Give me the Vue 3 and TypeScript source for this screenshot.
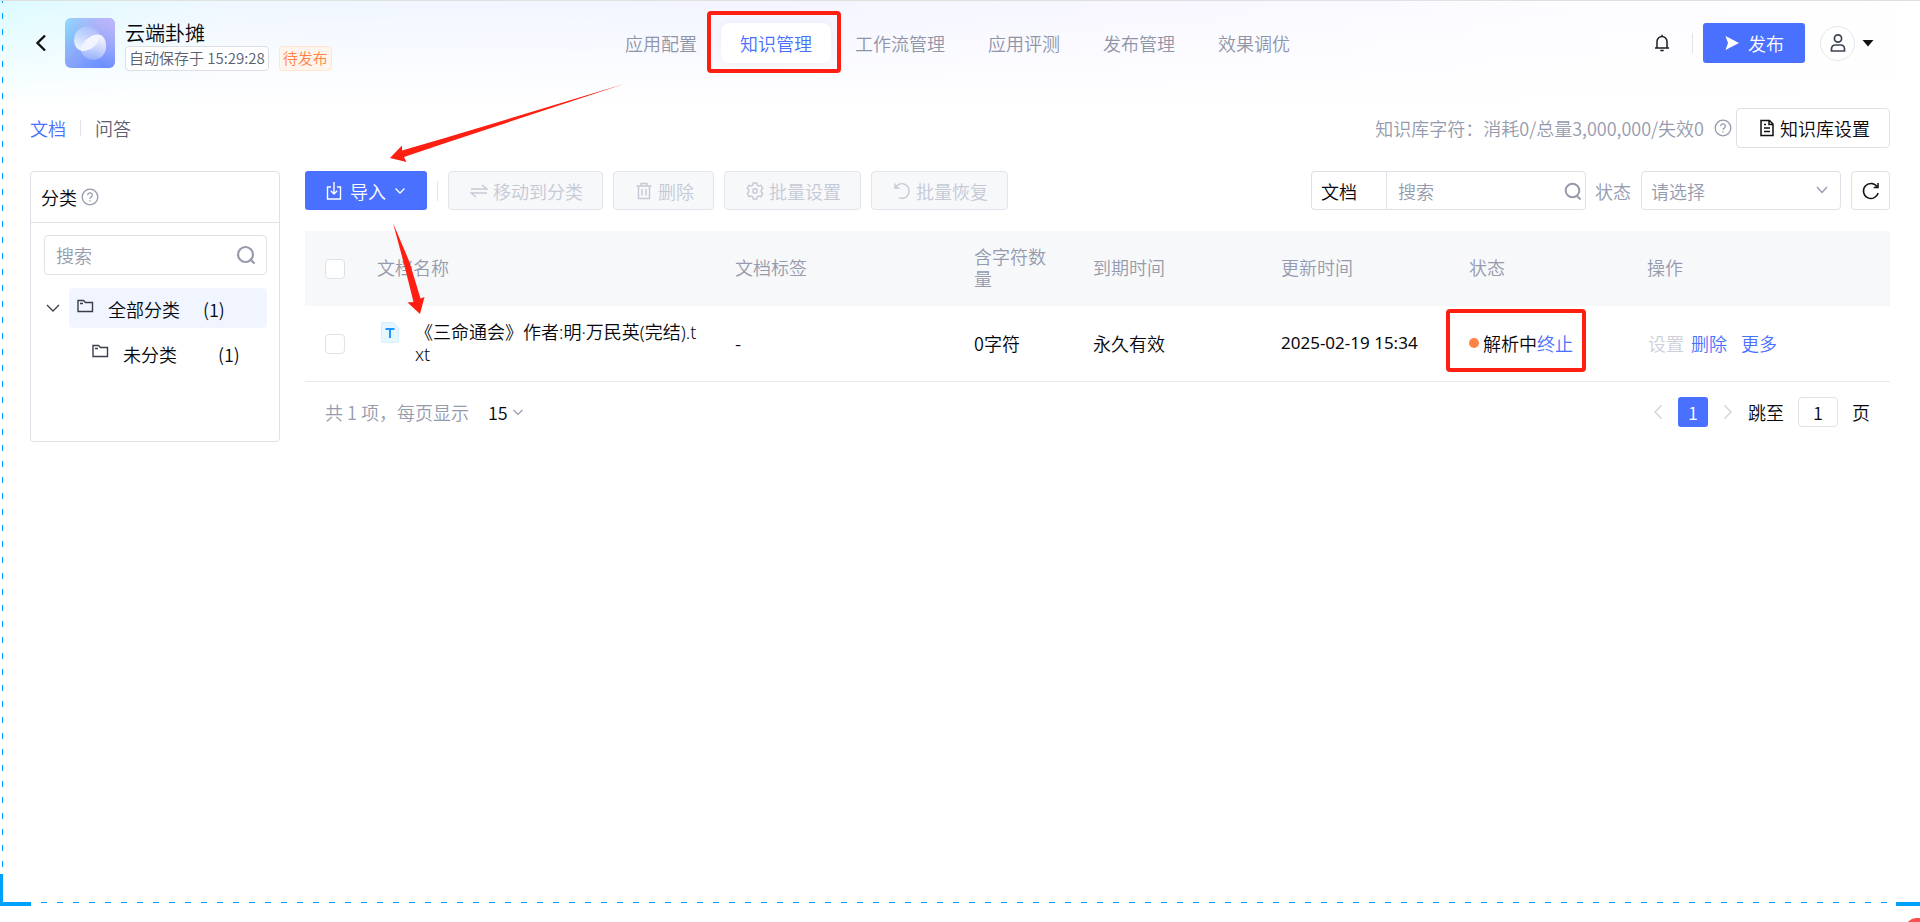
<script setup lang="ts">
import { ref } from 'vue'

interface NavItem { label: string; active?: boolean }
interface DocRow { name: string; tag: string; chars: string; expire: string; updated: string; status: string }

const nav: NavItem[] = [
  { label: '应用配置' },
  { label: '知识管理', active: true },
  { label: '工作流管理' },
  { label: '应用评测' },
  { label: '发布管理' },
  { label: '效果调优' },
]
const columns: string[] = ['文档名称', '文档标签', '含字符数量', '到期时间', '更新时间', '状态', '操作']
const rows: DocRow[] = [
  { name: '《三命通会》作者:明·万民英(完结).txt', tag: '-', chars: '0字符', expire: '永久有效', updated: '2025-02-19 15:34', status: '解析中' },
]
const categorySearch = ref('')
const keyword = ref('')
const jumpPage = ref('1')
</script>

<template>
  <div class="page">
    <header class="topbar">
      <div class="app">
        <button class="plain back" aria-label="返回">
          <svg width="12" height="18" viewBox="0 0 12 18"><path d="M10 1.500 2.500 9l7.500 7.500" fill="none" stroke="#111" stroke-width="2.400" /></svg>
        </button>
        <svg class="logo" viewBox="0 0 50 50">
          <defs>
            <linearGradient id="lg-base" x1="0" y1="0" x2="1" y2="1">
              <stop offset="0" stop-color="#86e0fb" /><stop offset=".45" stop-color="#8ba9fb" /><stop offset="1" stop-color="#5f86ff" />
            </linearGradient>
            <linearGradient id="lg-corner" x1="1" y1="0" x2=".4" y2=".6">
              <stop offset="0" stop-color="#c3b7f9" /><stop offset="1" stop-color="#c3b7f9" stop-opacity="0" />
            </linearGradient>
            <linearGradient id="lg-a" x1=".3" y1="1" x2=".6" y2="0">
              <stop offset="0" stop-color="#fff" stop-opacity=".9" /><stop offset="1" stop-color="#fff" stop-opacity=".12" />
            </linearGradient>
            <linearGradient id="lg-b" x1=".7" y1="0" x2=".4" y2="1">
              <stop offset="0" stop-color="#fff" stop-opacity=".9" /><stop offset="1" stop-color="#fff" stop-opacity=".22" />
            </linearGradient>
          </defs>
          <rect width="50" height="50" rx="6" fill="url(#lg-base)" />
          <rect width="50" height="50" rx="6" fill="url(#lg-corner)" />
          <path d="M9 22a13 13 0 0 1 25-5.500C25 16 18 21 15.500 32.500 11.500 31 9 27 9 22Z" fill="url(#lg-a)" />
          <path d="M41 27a13 13 0 0 1-25 6.500C25 34 32 28 34.500 16.500 38.500 18 41 22 41 27Z" fill="url(#lg-b)" />
          <path d="M15.500 33C16 24 24 16 34.500 16.500 34 26 26 34.500 15.500 33Z" fill="#fff" fill-opacity=".88" />
        </svg>
        <div class="app-info">
          <div class="app-name">云端卦摊</div>
          <div class="badges">
            <span class="badge">自动保存于 15:29:28</span>
            <span class="badge pending">待发布</span>
          </div>
        </div>
      </div>

      <nav class="nav">
        <a v-for="item in nav" :key="item.label" href="#" class="nav-item" :class="{ active: item.active }">
          {{ item.label }}<span v-if="item.active" class="mark nav-mark"></span>
        </a>
      </nav>

      <div class="account">
        <button class="plain" aria-label="通知">
          <svg width="16" height="18" viewBox="0 0 16 18" fill="none" stroke="#1b1d22" stroke-width="1.500">
            <path d="M1 14h14M3 14V7.500a5 5 0 0 1 10 0V14M8 2.500V.8M6.300 16.500h3.400" />
          </svg>
        </button>
        <i class="vline bell-line"></i>
        <button class="primary publish">
          <svg width="16" height="16" viewBox="0 0 16 16"><path d="M1.500 1 15 8 1.500 15 4 8Z" fill="#fff" /></svg>
          发布
        </button>
        <button class="plain user" aria-label="账户">
          <span class="avatar">
            <svg width="18" height="20" viewBox="0 0 18 20" fill="none" stroke="#3c4353" stroke-width="1.700">
              <circle cx="9" cy="5.500" r="3.600" /><path d="M2.500 18v-2.500a4 4 0 0 1 4-3.500h5a4 4 0 0 1 4 3.500V18Z" />
            </svg>
          </span>
          <svg width="12" height="8" viewBox="0 0 12 8"><path d="M.5 1h11L6 7.500Z" fill="#111" /></svg>
        </button>
      </div>
    </header>

    <div class="subbar">
      <nav class="tabs">
        <a href="#" class="tab active">文档</a>
        <i class="vline tab-line"></i>
        <a href="#" class="tab">问答</a>
      </nav>
      <div class="usage">
        <span>知识库字符：消耗0/总量3,000,000/失效0</span>
        <svg class="help" viewBox="0 0 18 18"><circle cx="9" cy="9" r="7.800" /><path d="M6.700 7.200a2.300 2.300 0 1 1 3.500 1.900c-.8.5-1.200.8-1.200 1.700M9 12.200v1.300" /></svg>
        <button class="box settings">
          <svg width="16" height="18" viewBox="0 0 16 18" fill="none" stroke="#111" stroke-width="1.500">
            <path d="M2 1.500h8.500L14 5v11.500H2ZM10 1.500V5.500h4M5 9h6M5 12.500h6M5 5.500h2" />
          </svg>
          知识库设置
        </button>
      </div>
    </div>

    <main class="content">
      <aside class="side">
        <h2 class="side-title">分类
          <svg class="help" viewBox="0 0 18 18"><circle cx="9" cy="9" r="7.800" /><path d="M6.700 7.200a2.300 2.300 0 1 1 3.500 1.900c-.8.5-1.200.8-1.200 1.700M9 12.200v1.300" /></svg>
        </h2>
        <div class="side-body">
          <label class="field side-search">
            <input v-model="categorySearch" type="text" placeholder="搜索" aria-label="搜索分类" />
            <svg width="20" height="20" viewBox="0 0 20 20" fill="none" stroke="#959bad" stroke-width="2.200"><circle cx="9.500" cy="9.500" r="7.500" /><path d="m14 14 4.500 4.500" /></svg>
          </label>
          <ul class="tree">
            <li class="node">
              <button class="plain toggle" aria-label="收起">
                <svg width="14" height="10" viewBox="0 0 14 10"><path d="m1 2 6 6 6-6" fill="none" stroke="#3a3f4b" stroke-width="1.300" /></svg>
              </button>
              <a href="#" class="node-label selected">
                <svg class="folder" viewBox="0 0 17 14"><path d="M1 1.500h5.500l2 2H15.500v9H1ZM3 4.500h3" /></svg>
                <span class="node-name">全部分类</span><span>(1)</span>
              </a>
            </li>
            <li class="node child">
              <a href="#" class="node-label">
                <svg class="folder" viewBox="0 0 17 14"><path d="M1 1.500h5.500l2 2H15.500v9H1ZM3 4.500h3" /></svg>
                <span class="node-name">未分类</span><span>(1)</span>
              </a>
            </li>
          </ul>
        </div>
      </aside>

      <section class="docs">
        <div class="toolbar">
          <div class="actions">
            <button class="primary import">
              <svg width="16" height="20" viewBox="0 0 16 20" fill="none" stroke="#fff" stroke-width="1.400">
                <path d="M5 6H1.500v12h13V6H11M8 1v12M4.800 9.800 8 13l3.200-3.200" />
              </svg>
              导入
              <svg width="12" height="8" viewBox="0 0 12 8"><path d="m1.500 1.500 4.500 4.500 4.500-4.500" fill="none" stroke="#fff" stroke-width="1.300" /></svg>
            </button>
            <i class="vline action-line"></i>
            <button class="ghost" disabled>
              <svg class="act" viewBox="0 0 18 18"><path d="M1 7h16l-5-4M17 11H1l5 4" /></svg>移动到分类
            </button>
            <button class="ghost" disabled>
              <svg class="act" viewBox="0 0 18 18"><path d="M1.500 4h15M6 4V1.500h6V4M3.500 4v12.500h11V4M7 7v6.500M11 7v6.500" /></svg>删除
            </button>
            <button class="ghost" disabled>
              <svg class="act" viewBox="0 0 18 18"><path d="M7.300 1h3.400l.6 2.200 1.500.8 2.200-.6 1.700 2.900L15.200 8v2l1.500 1.700-1.700 2.900-2.200-.6-1.500.8-.6 2.200H7.300l-.6-2.200-1.500-.8-2.200.6-1.700-2.900L2.800 10V8L1.300 6.300 3 3.400l2.200.6 1.500-.8Z" /><circle cx="9" cy="9" r="2.200" /></svg>批量设置
            </button>
            <button class="ghost" disabled>
              <svg class="act" viewBox="0 0 18 18"><path d="M2 1.500V6h4.500M2.300 5.800A7.300 7.300 0 1 1 6 15.700" /></svg>批量恢复
            </button>
          </div>

          <div class="filters">
            <select class="box kind" aria-label="搜索类型"><option>文档</option></select>
            <label class="field keyword">
              <input v-model="keyword" type="text" placeholder="搜索" aria-label="搜索文档" />
              <svg width="18" height="20" viewBox="0 0 18 20" fill="none" stroke="#959bad" stroke-width="2"><circle cx="8.500" cy="9.500" r="6.800" /><path d="m12.500 14.500 4 4" /></svg>
            </label>
            <label class="state-label" for="state">状态</label>
            <div class="select-wrap">
              <select id="state" class="box state"><option>请选择</option></select>
              <svg class="caret" width="12" height="8" viewBox="0 0 12 8"><path d="m1 1 5 5.500L11 1" fill="none" stroke="#959bad" stroke-width="1.300" /></svg>
            </div>
            <button class="box refresh" aria-label="刷新">
              <svg width="20" height="20" viewBox="0 0 20 20" fill="none" stroke="#111" stroke-width="1.500"><path d="M17.200 12A7.500 7.500 0 1 1 16 5.500M17 2v4.500h-4.300" /></svg>
            </button>
          </div>
        </div>

        <table class="grid">
          <colgroup>
            <col class="c-check" /><col class="c-name" /><col class="c-tag" /><col class="c-chars" /><col class="c-time" /><col class="c-time" /><col class="c-status" /><col class="c-ops" />
          </colgroup>
          <thead>
            <tr>
              <th class="check"><input type="checkbox" aria-label="全选" /></th>
              <th v-for="c in columns" :key="c">{{ c }}</th>
            </tr>
          </thead>
          <tbody>
            <tr v-for="r in rows" :key="r.name">
              <td class="check"><input type="checkbox" :aria-label="r.name" /></td>
              <td>
                <div class="file">
                  <svg class="file-icon" viewBox="0 0 18 21">
                    <path d="M2 .5h10.500l5 5V19a1.500 1.500 0 0 1-1.500 1.500H2A1.500 1.500 0 0 1 .5 19V2A1.500 1.500 0 0 1 2 .5Z" fill="#e6f6ff" stroke="#d4effe" />
                    <path d="M4.500 7h9M9 7v9" fill="none" stroke="#1e96ff" stroke-width="2" />
                  </svg>
                  <span class="file-name">{{ r.name }}</span>
                </div>
              </td>
              <td>{{ r.tag }}</td>
              <td>{{ r.chars }}</td>
              <td>{{ r.expire }}</td>
              <td class="date">{{ r.updated }}</td>
              <td>
                <div class="status"><i class="dot"></i>{{ r.status }}<a href="#" class="link">终止</a><span class="mark status-mark"></span></div>
              </td>
              <td>
                <div class="ops">
                  <button class="plain off" disabled>设置</button>
                  <a href="#" class="link">删除</a>
                  <a href="#" class="link more">更多</a>
                </div>
              </td>
            </tr>
          </tbody>
        </table>

        <footer class="pager">
          <div class="pager-size">
            <label for="size">共 1 项，每页显示</label>
            <div class="select-wrap">
              <select id="size" class="size"><option>15</option></select>
              <svg class="size-caret" width="12" height="8" viewBox="0 0 12 8"><path d="m1.500 1 4.500 4.500L10.500 1" fill="none" stroke="#959bad" stroke-width="1.200" /></svg>
            </div>
          </div>
          <div class="pager-nav">
            <button class="plain step" aria-label="上一页"><svg width="10" height="16" viewBox="0 0 10 16"><path d="M8.500 1.500 2 8l6.500 6.500" fill="none" stroke="#cdd0d9" stroke-width="1.300" /></svg></button>
            <button class="primary current">1</button>
            <button class="plain step" aria-label="下一页"><svg width="10" height="16" viewBox="0 0 10 16"><path d="M1.500 1.500 8 8l-6.500 6.500" fill="none" stroke="#cdd0d9" stroke-width="1.300" /></svg></button>
            <label for="jump">跳至</label>
            <input id="jump" v-model="jumpPage" class="jump" type="text" />
            <span>页</span>
          </div>
        </footer>
      </section>
    </main>

    <svg class="arrows" width="640" height="330" viewBox="0 0 640 330" fill="#ff1e12">
      <path d="M390 158 402 145.500V150.500L444 138.300 624 84 444 143.500 404 157 406.500 162Z" />
      <path d="M393 223 409.500 262 420.500 298.500 424.500 297 420 314 407.500 302.500 413.500 302 404 264Z" />
    </svg>
    <div class="guides">
      <i class="guide-left"></i><i class="guide-bottom"></i>
      <i class="corner corner-left"></i><i class="corner corner-right"></i>
      <i class="bubble"></i>
    </div>
  </div>
</template>

<style>
body { background: #fff; }
html { overflow: hidden; }
</style>

<style scoped>
.page {
  position: relative;
  box-sizing: border-box;
  min-height: 100vh;
  overflow: hidden;
  border-top: 1px solid #dfe0e0;
  font: 350 18px/22px "Noto Sans CJK SC", sans-serif;
  color: #07080c;
  background:
    linear-gradient(180deg, rgba(255, 255, 255, 0) 0, #fff 105px),
    linear-gradient(90deg, #dcfbff 0, #f0f7ff 12%, #f3f5ff 40%, #f8f7ff 60%, #fcfbff 80%, #fff 100%);
}
.page *, .page *::before { box-sizing: border-box; }
a { color: inherit; text-decoration: none; }
button, input, select { font: inherit; color: inherit; margin: 0; }
button { display: inline-flex; align-items: center; justify-content: center; padding: 0; white-space: nowrap; }
svg { flex: none; display: block; }
.plain { border: 0; background: none; }
.primary { border: 0; border-radius: 3px; background: #4a70ff; color: #fff; }
.box { border: 1px solid #dfe1e8; border-radius: 4px; background: #fff; }
.vline { display: block; width: 1px; height: 20px; background: #e1e3ea; }

.topbar { display: grid; grid-template-columns: 1fr auto 1fr; align-items: center; height: 84px; padding: 0 40px 0 35px; }
.app { display: flex; align-items: center; }
.back { width: 12px; }
.logo { width: 50px; height: 50px; margin: 0 10px 0 18px; }
.app-info { display: grid; padding-top: 4px; }
.app-name { font-size: 20px; line-height: 26px; }
.badges { display: flex; gap: 10px; }
.badge { height: 25px; padding: 0 3px; border: 1px solid #dcdee6; border-radius: 4px; background: #fff; color: #5a6072; font-size: 15px; line-height: 22px; white-space: nowrap; }
.pending { border-color: #ffe6d3; background: #fff5ec; color: #ff8345; }
.nav { display: flex; gap: 5px; }
.nav-item { position: relative; height: 40px; padding: 0 19px; border-radius: 8px; line-height: 40px; color: #8f95a8; white-space: nowrap; }
.nav-item.active { background: #fff; color: #4a70ff; box-shadow: 0 0 8px rgba(60, 80, 140, .08); }
.mark { position: absolute; border: 4px solid #ff1e12; border-radius: 4px; pointer-events: none; }
.nav-mark { inset: -12px -10px -10px -14px; }
.account { display: flex; align-items: center; justify-content: flex-end; padding-right: 6px; }
.bell-line { margin: 0 10px 0 22px; }
.publish { gap: 8px; width: 102px; height: 40px; margin-right: 15px; }
.user { gap: 7px; }
.avatar { display: grid; place-items: center; width: 35px; height: 35px; border: 1px solid #e5e7ee; border-radius: 50%; background: #fff; }

.subbar { display: flex; align-items: center; justify-content: space-between; padding: 23px 30px 0; }
.tabs { display: flex; align-items: center; gap: 14px; }
.tab { color: #5a6072; }
.tab.active { color: #4a70ff; }
.tab-line { height: 16px; }
.usage { display: flex; align-items: center; color: #959bad; }
.help { width: 18px; height: 18px; fill: none; stroke: #959bad; stroke-width: 1.300; }
.usage .help { margin: 0 4px 0 10px; }
.settings { gap: 5px; height: 40px; padding: 0 19px 0 22px; color: #07080c; }

.content { display: flex; align-items: flex-start; gap: 25px; padding: 23px 30px 0; }
.side { flex: none; width: 250px; min-height: 271px; border: 1px solid #dfe1e8; border-radius: 4px; }
.side-title { display: flex; align-items: center; gap: 4px; height: 51px; margin: 0; padding: 0 10px; border-bottom: 1px solid #dfe1e8; font: inherit; }
.side-body { padding: 12px 12px 0 13px; }
.field { display: flex; align-items: center; border: 1px solid #dfe1e8; border-radius: 4px; background: #fff; }
.field input { flex: 1; min-width: 0; height: 100%; padding: 0; border: 0; outline: 0; background: none; }
.field input::placeholder { color: #959bad; opacity: 1; }
.side-search { height: 40px; padding: 0 10px 0 11px; }
.tree { display: grid; gap: 5px; margin: 13px 0 0; padding: 0; list-style: none; }
.node { display: flex; align-items: center; }
.toggle { width: 25px; justify-content: flex-start; padding-left: 2px; }
.node-label { flex: 1; display: flex; align-items: center; height: 40px; padding: 2px 0 0 8px; border-radius: 4px; }
.selected { background: #f0f5ff; }
.child { padding-left: 40px; }
.folder { width: 17px; height: 14px; margin: 0 14px 6px 0; fill: none; stroke: #3a3f4b; stroke-width: 1.400; }
.node-name { min-width: 95px; }

.docs { flex: 1; min-width: 0; }
.toolbar { display: flex; justify-content: space-between; }
.actions { display: flex; align-items: center; gap: 10px; }
.import { gap: 8px; width: 122px; height: 39px; }
.ghost { gap: 5px; height: 39px; padding: 0 19px 0 21px; border: 1px solid #e3e5ec; border-radius: 4px; background: #f7f8fa; color: #c5c9d5; }
.act { width: 18px; height: 18px; fill: none; stroke: #c5c9d5; stroke-width: 1.400; }
.filters { display: flex; align-items: center; }
.kind, .state, .size { appearance: none; }
.kind { width: 75px; height: 39px; padding: 0 9px; border-radius: 4px 0 0 4px; border-right: 0; }
.keyword { width: 200px; height: 39px; padding: 0 3px 0 11px; border-radius: 0 4px 4px 0; }
.state-label { margin: 0 10px 0 9px; color: #959bad; }
.select-wrap { position: relative; }
.state { display: block; width: 200px; height: 39px; padding: 0 9px; color: #959bad; }
.caret, .size-caret { position: absolute; right: 13px; top: 15px; pointer-events: none; }
.refresh { width: 39px; height: 39px; margin-left: 10px; }

.grid { width: 100%; margin-top: 21px; border-collapse: collapse; table-layout: fixed; }
.c-check { width: 72px; } .c-name { width: 358px; } .c-tag { width: 239px; } .c-chars { width: 119px; }
.c-time { width: 188px; } .c-status { width: 178px; } .c-ops { width: 243px; }
th, td { height: 75px; padding: 0 32px 0 0; text-align: left; font-weight: 350; }
th { padding-bottom: 3px; background: #f7f8fa; color: #959bad; }
.grid .check { padding: 1px 0 0 20px; }
tbody tr { border-bottom: 1px solid #e8eaef; }
.check input { display: block; appearance: none; width: 20px; height: 20px; border: 1px solid #dfe1e8; border-radius: 4px; background: #fff; }
.file { display: flex; align-items: flex-start; padding-left: 4px; }
.file-icon { width: 18px; height: 21px; margin: 1px 16px 0 0; }
.file-name { font-family: "Noto Sans", "Noto Sans CJK SC", sans-serif; word-break: break-all; }
.grid .date { padding: 0; font-family: "Noto Sans", "Noto Sans CJK SC", sans-serif; font-size: 17px; font-weight: 400; white-space: nowrap; }
.status { position: relative; display: flex; align-items: center; width: fit-content; margin-right: -32px; white-space: nowrap; }
.dot { width: 10px; height: 10px; margin-right: 4px; border-radius: 50%; background: #ff8345; }
.status-mark { inset: -23px -13px -18px -23px; }
.link { color: #4a70ff; }
.ops { display: flex; gap: 7px; padding-left: 1px; white-space: nowrap; }
.more { margin-left: 7px; }
.off { color: #cdd0d9; }

.pager { display: flex; align-items: center; justify-content: space-between; padding: 15px 20px 0; }
.pager-size { display: flex; align-items: center; gap: 19px; color: #959bad; }
.size { width: 40px; padding: 0; border: 0; background: none; color: #07080c; }
.size-caret { right: 4px; top: 8px; }
.pager-nav { display: flex; align-items: center; gap: 14px; }
.step { width: 12px; }
.current { width: 30px; height: 30px; }
.jump { width: 40px; height: 30px; padding: 0; border: 1px solid #dfe1e8; border-radius: 4px; text-align: center; }

.arrows { position: absolute; left: 0; top: -1px; pointer-events: none; }
.guides { position: absolute; inset: -1px 0 0; pointer-events: none; overflow: hidden; }
.guides i { position: absolute; }
.guide-left { left: 2px; top: 0; bottom: 48px; width: 1px; background: repeating-linear-gradient(180deg, #00a0ff 0 3px, transparent 3px 13px, #00a0ff 13px 16px); }
.guide-bottom { left: 41px; right: 32px; bottom: 19px; height: 1px; background: repeating-linear-gradient(90deg, #00a0ff 0 6px, transparent 6px 16px); }
.corner { bottom: 16px; border: 0 solid #00a0ff; border-bottom-width: 4px; }
.corner-left { left: 0; width: 31px; height: 32px; border-left-width: 3px; }
.corner-right { right: 0; width: 24px; height: 4px; }
.bubble { right: -16px; bottom: -26px; width: 30px; height: 30px; border-radius: 10px; background: #ff4f4f; }
</style>
